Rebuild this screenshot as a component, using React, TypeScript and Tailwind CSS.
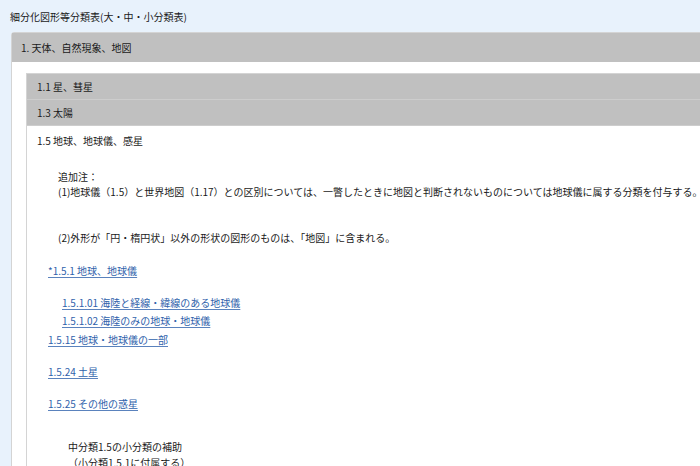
import type { ReactNode } from "react";

function Row({ className, children }: { className: string; children: ReactNode }) {
  return <div className={`leading-[14px] whitespace-nowrap ${className}`}>{children}</div>;
}

function A({ children }: { children: ReactNode }) {
  return (
    <a href="#" className="text-[#2f62ab] underline underline-offset-[2px] decoration-[#5a82bd]">
      {children}
    </a>
  );
}

export default function App() {
  return (
    <div className="h-[466px] w-[700px] overflow-hidden bg-[#e8f2fc] font-['Noto_Sans_CJK_JP',sans-serif] text-[10px] text-[#1a1a1a]">
      <div className="flex h-8 items-center pl-[10px]">細分化図形等分類表(大・中・小分類表)</div>

      <div className="ml-[11px] w-[780px] rounded-t-[3px] border border-[#d4d4d4] bg-white">
        <div className="flex h-[29px] items-center bg-[#c0c0c0] pl-[9px]">1. 天体、自然現象、地図</div>

        <div className="pl-[14px] pt-[11px]">
          <div className="border border-[#d4d4d4] bg-white">
            <div className="flex h-[26px] items-center border-b border-[#cdcdcd] bg-[#c0c0c0] pl-[10px]">
              1.1 星、彗星
            </div>
            <div className="flex h-[26px] items-center border-b border-[#cdcdcd] bg-[#c0c0c0] pl-[10px]">
              1.3 太陽
            </div>

            <div className="pl-[10px]">
              <Row className="mt-[8px]">1.5 地球、地球儀、感星</Row>

              <div className="mt-[21px] pl-[21px] leading-[15px]">
                <div>追加注：</div>
                <div className="whitespace-nowrap">
                  (1)地球儀（1.5）と世界地図（1.17）との区別については、一瞥したときに地図と判断されないものについては地球儀に属する分類を付与する。
                </div>
              </div>
              <Row className="mt-[32px] pl-[21px]">(2)外形が「円・楕円状」以外の形状の図形のものは、「地図」に含まれる。</Row>

              <Row className="mt-[19px] pl-[11px]">
                <A>*1.5.1 地球、地球儀</A>
              </Row>
              <Row className="mt-[18px] pl-[25px]">
                <A>1.5.1.01 海陸と経線・緯線のある地球儀</A>
              </Row>
              <Row className="mt-[4px] pl-[25px]">
                <A>1.5.1.02 海陸のみの地球・地球儀</A>
              </Row>
              <Row className="mt-[5px] pl-[11px]">
                <A>1.5.15 地球・地球儀の一部</A>
              </Row>
              <Row className="mt-[18px] pl-[11px]">
                <A>1.5.24 土星</A>
              </Row>
              <Row className="mt-[18px] pl-[11px]">
                <A>1.5.25 その他の惑星</A>
              </Row>

              <div className="mt-[28px] pl-[31px] leading-[16px]">
                <div>中分類1.5の小分類の補助</div>
                <div>（小分類1.5.1に付属する）</div>
              </div>
            </div>
          </div>
        </div>
      </div>
    </div>
  );
}
